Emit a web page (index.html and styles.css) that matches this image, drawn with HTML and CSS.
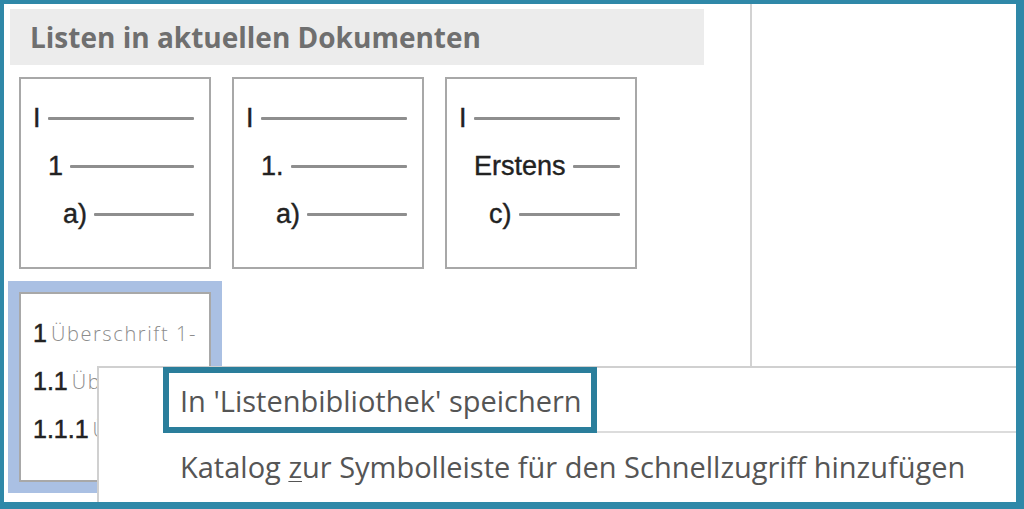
FILE: index.html
```html
<!DOCTYPE html>
<html lang="de">
<head>
<meta charset="utf-8">
<title>Listen in aktuellen Dokumenten</title>
<link rel="stylesheet" href="styles.css">
</head>
<body>
<div class="frame">
  <div class="panel">
    <div class="gallery-head">Listen in aktuellen Dokumenten</div>
    <div class="grid">
      <div class="card">
        <div class="row r1"><span class="lbl">I</span><span class="rule"></span></div>
        <div class="row r2"><span class="lbl">1</span><span class="rule"></span></div>
        <div class="row r3"><span class="lbl">a)</span><span class="rule"></span></div>
      </div>
      <div class="card">
        <div class="row r1"><span class="lbl">I</span><span class="rule"></span></div>
        <div class="row r2"><span class="lbl">1.</span><span class="rule"></span></div>
        <div class="row r3"><span class="lbl">a)</span><span class="rule"></span></div>
      </div>
      <div class="card">
        <div class="row r1"><span class="lbl">I</span><span class="rule"></span></div>
        <div class="row r2"><span class="lbl">Erstens</span><span class="rule"></span></div>
        <div class="row r3"><span class="lbl">c)</span><span class="rule"></span></div>
      </div>
      <div class="card selected">
        <div class="row r1"><span class="num">1</span><span class="head">Überschrift 1-</span></div>
        <div class="row r1"><span class="num">1.1</span><span class="head">Überschrift 2-</span></div>
        <div class="row r1"><span class="num">1.1.1</span><span class="head">Überschrift 3-</span></div>
      </div>
    </div>
  </div>
  <div class="menu">
    <div class="menu-row first">
      <div class="menu-item focused"><span>In 'Listenbibliothek' speichern</span></div>
    </div>
    <div class="menu-row">
      <div class="menu-item"><span>Katalog <span class="acc">z</span>ur Symbolleiste für den Schnellzugriff hinzufügen</span></div>
    </div>
  </div>
</div>
</body>
</html>
```
FILE: styles.css
```css
html, body {
  margin: 0;
  padding: 0;
  background: #ffffff;
}

.frame {
  position: relative;
  width: 1024px;
  height: 509px;
  box-sizing: border-box;
  border-style: solid;
  border-color: #2f88a8;
  border-width: 4px 8px 7px 4px;
  background: #ffffff;
  display: flex;
  overflow: hidden;
}

.panel {
  width: 748px;
  box-sizing: border-box;
  border-right: 2px solid #d2d2d2;
  padding: 5px 0 0 6px;
  display: flex;
  flex-direction: column;
}

.gallery-head {
  width: 694px;
  height: 56px;
  box-sizing: border-box;
  background: #ececec;
  padding-left: 20px;
  display: flex;
  align-items: center;
  font-family: "Open Sans", sans-serif;
  font-weight: 700;
  font-size: 28px;
  color: #6f6f6f;
}

.grid {
  margin: 12px 0 0 9px;
  display: grid;
  grid-template-columns: repeat(3, 192px);
  column-gap: 21px;
  row-gap: 23px;
}

.card {
  width: 192px;
  height: 192px;
  box-sizing: border-box;
  border: 2px solid #a8a8a8;
  padding: 15px 15px 0 0;
  background: #ffffff;
  font-family: "Liberation Sans", Arial, sans-serif;
  font-size: 27px;
  color: #222222;
  -webkit-text-stroke: 0.4px #222222;
}

.card.selected {
  height: 190px;
  box-shadow: 0 0 0 11px #aac0e3;
}

.row {
  display: flex;
  align-items: center;
  height: 48px;
  gap: 7px;
  white-space: nowrap;
}

.r1 { padding-left: 12px; }
.r2 { padding-left: 27px; }
.r3 { padding-left: 42px; }

.rule {
  flex: 1;
  height: 3px;
  background: #8e8e8e;
  border-radius: 1px;
}

.num {
  font-size: 25px;
  color: #222222;
  -webkit-text-stroke: 0.5px #222222;
}

.head {
  font-family: "Open Sans", sans-serif;
  font-weight: 300;
  font-size: 20px;
  letter-spacing: 1.6px;
  color: #8c8c8c;
  -webkit-text-stroke: 0;
  margin-left: -3px;
}

.menu {
  position: absolute;
  left: 93px;
  top: 362px;
  right: 0;
  bottom: 0;
  background: #ffffff;
  border-top: 2px solid #d0d0d0;
  border-left: 2px solid #d0d0d0;
  font-family: "Open Sans", sans-serif;
  font-size: 29px;
  color: #555555;
  display: flex;
  flex-direction: column;
}

.menu-row {
  margin-left: 64px;
  display: flex;
}

.menu-row.first {
  margin-top: -1px;
  border-bottom: 2px solid #dcdcdc;
}

.menu-item {
  height: 66px;
  box-sizing: border-box;
  padding-left: 17px;
  display: flex;
  align-items: center;
  white-space: nowrap;
}

.menu-item.focused {
  width: 434px;
  border: 6px solid #2a7e9b;
  padding-left: 11px;
  margin-bottom: -2px;
}

.acc {
  text-decoration: underline;
  text-underline-offset: 3px;
  text-decoration-thickness: 1px;
}
```
